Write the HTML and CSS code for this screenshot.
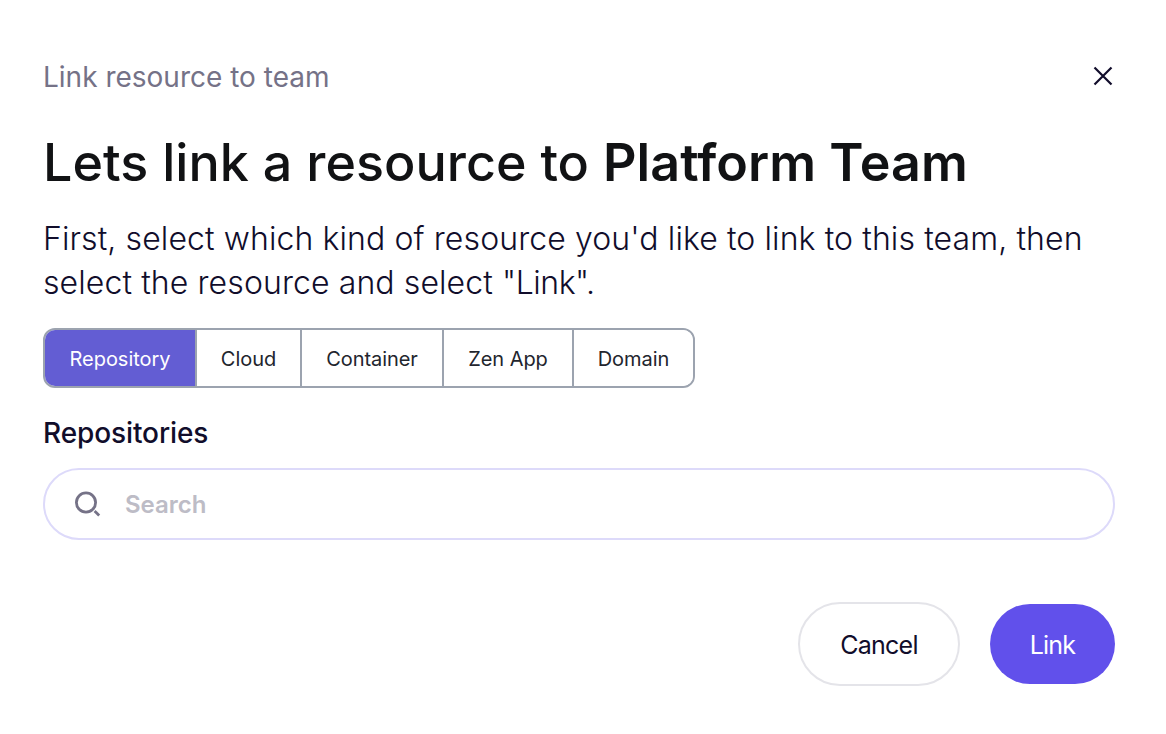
FILE: index.html
```html
<!DOCTYPE html>
<html lang="en">
<head>
<meta charset="utf-8">
<title>Link resource to team</title>
<link rel="stylesheet" href="styles.css">
</head>
<body>
<div class="modal">
  <div class="modal-header">
    <span class="modal-label">Link resource to team</span>
    <button class="close" aria-label="Close">
      <svg width="20" height="20" viewBox="0 0 20 20" fill="none" stroke="#110d2b" stroke-width="2.2"><path d="M1.5 1.5l17 17M18.5 1.5l-17 17"/></svg>
    </button>
  </div>

  <h1>Lets link a resource to <strong>Platform Team</strong></h1>
  <p class="intro">First, select which kind of resource you'd like to link to this team, then<br>select the resource and select <span class="quoted">"Link".</span></p>

  <div class="tabs">
    <button class="tab active">Repository</button>
    <button class="tab cloud">Cloud</button>
    <button class="tab container">Container</button>
    <button class="tab zen">Zen App</button>
    <button class="tab domain">Domain</button>
  </div>

  <h2>Repositories</h2>
  <label class="search">
    <svg width="28" height="28" viewBox="0 0 28 28" fill="none" stroke="#757287" stroke-width="2.8"><circle cx="12" cy="12.5" r="9.6"/><path d="M20.6 21l4.6 4.4"/></svg>
    <input type="text" placeholder="Search">
  </label>

  <div class="actions">
    <button class="btn cancel">Cancel</button>
    <button class="btn primary">Link</button>
  </div>
</div>
</body>
</html>
```

FILE: styles.css
```css
* {
  box-sizing: border-box;
}

body {
  margin: 0;
  background: #fff;
  color: #110d2b;
  font-family: Inter, "Liberation Sans", sans-serif;
}

button, input {
  font-family: inherit;
  color: inherit;
}

.modal {
  padding: 56px 51px 48px 43px;
}

.modal-header {
  display: flex;
  justify-content: space-between;
  align-items: center;
  height: 40px;
}

.modal-label {
  padding-top: 2px;
  color: #757287;
  font-size: 28px;
  line-height: 40px;
}

.close {
  display: flex;
  margin-right: 2px;
  padding: 0;
  border: 0;
  background: none;
}

h1 {
  margin: 35px 0 0;
  color: #111214;
  font-size: 52px;
  font-weight: 500;
  line-height: 64px;
  letter-spacing: 0.03px;
  white-space: nowrap;
}

h1 strong {
  font-weight: 600;
  letter-spacing: 0.1px;
}

.intro {
  margin: 22px 0 0;
  font-size: 32px;
  font-weight: 300;
  line-height: 44px;
  letter-spacing: 0.1px;
  white-space: nowrap;
}

.quoted {
  letter-spacing: -0.45px;
}

.tabs {
  display: flex;
  width: 652px;
  height: 60px;
  margin-top: 23px;
  border: 2px solid #9ca3af;
  border-radius: 12px;
  overflow: hidden;
}

.tab {
  width: 150px;
  padding: 2px 0 0;
  border: 0;
  background: #fff;
  color: #22252d;
  font-size: 20px;
  letter-spacing: -0.05px;
}

.tab + .tab {
  border-left: 2px solid #9ca3af;
}

.tab.active {
  background: #635dd3;
  color: #fff;
}

.cloud {
  width: 105px;
}

.container {
  width: 142px;
}

.zen {
  width: 130px;
}

.domain {
  flex: 1;
}

h2 {
  margin: 27px 0 0;
  font-size: 28px;
  font-weight: 550;
  line-height: 36px;
  letter-spacing: -0.1px;
}

.search {
  display: flex;
  align-items: center;
  height: 72px;
  margin-top: 17px;
  padding-left: 29px;
  border: 2px solid #dddafa;
  border-radius: 36px;
}

.search input {
  flex: 1;
  margin-left: 23px;
  padding: 0;
  border: 0;
  outline: 0;
  background: none;
  font-size: 24px;
  font-weight: 600;
}

.search input::placeholder {
  color: #bdbcc6;
  opacity: 1;
}

.actions {
  display: flex;
  justify-content: flex-end;
  align-items: center;
  gap: 30px;
  margin-top: 62px;
}

.btn {
  padding: 2px 0 0;
  font-size: 25px;
  letter-spacing: -0.75px;
}

.cancel {
  width: 162px;
  height: 84px;
  border: 2px solid #e4e4e9;
  border-radius: 42px;
  background: #fff;
}

.primary {
  width: 125px;
  height: 80px;
  border: 0;
  border-radius: 40px;
  background: #6150eb;
  color: #fff;
}
```
